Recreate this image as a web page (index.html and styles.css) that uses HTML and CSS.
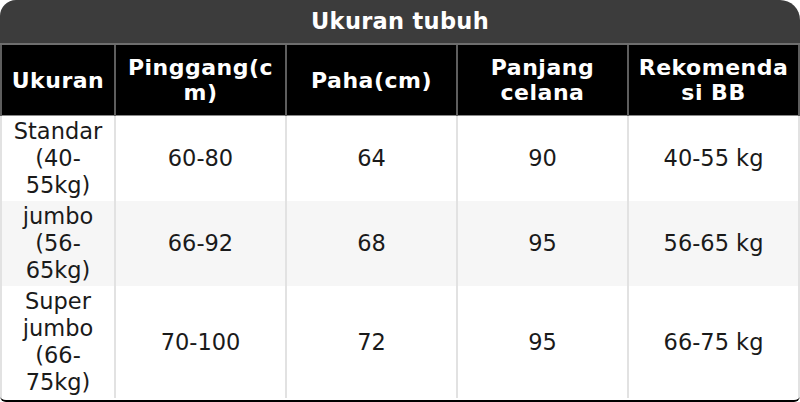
FILE: index.html
```html
<!DOCTYPE html>
<html lang="id">
<head>
<meta charset="utf-8">
<title>Ukuran tubuh</title>
<link rel="stylesheet" href="styles.css">
</head>
<body>
<div class="card">
  <div class="title">Ukuran tubuh</div>
  <table class="sizes">
    <colgroup>
      <col class="col-first">
      <col>
      <col>
      <col>
      <col>
    </colgroup>
    <thead>
      <tr>
        <th>Ukuran</th>
        <th>Pinggang(cm)</th>
        <th>Paha(cm)</th>
        <th>Panjang celana</th>
        <th>Rekomendasi BB</th>
      </tr>
    </thead>
    <tbody>
      <tr>
        <td>Standar (40-55kg)</td>
        <td>60-80</td>
        <td>64</td>
        <td>90</td>
        <td>40-55 kg</td>
      </tr>
      <tr class="alt">
        <td>jumbo (56-65kg)</td>
        <td>66-92</td>
        <td>68</td>
        <td>95</td>
        <td>56-65 kg</td>
      </tr>
      <tr>
        <td>Super jumbo (66-75kg)</td>
        <td>70-100</td>
        <td>72</td>
        <td>95</td>
        <td>66-75 kg</td>
      </tr>
    </tbody>
  </table>
</div>
</body>
</html>
```
FILE: styles.css
```css
html, body {
  margin: 0;
  padding: 0;
  background: #ffffff;
}

body {
  font-family: "DejaVu Sans", "Liberation Sans", sans-serif;
}

.card {
  width: 800px;
  height: 402px;
  box-sizing: border-box;
  overflow: hidden;
  border-radius: 16px 20px 6px 6px;
  border-bottom: 2px solid #000000;
  background: #ffffff;
}

.title {
  height: 43px;
  line-height: 43px;
  background: #3c3c3c;
  border-bottom: 2px solid #6e6e6e;
  color: #ffffff;
  font-weight: bold;
  font-size: 22.5px;
  letter-spacing: 0.3px;
  text-align: center;
}

.sizes {
  width: 100%;
  border-collapse: collapse;
  table-layout: fixed;
}

.col-first {
  width: 114px;
}

.sizes th {
  background: #000000;
  color: #ffffff;
  font-weight: bold;
  font-size: 22px;
  letter-spacing: 0.5px;
  line-height: 25px;
  padding: 10px 7px;
  text-align: center;
  vertical-align: middle;
  overflow-wrap: anywhere;
  border-left: 2px solid #5e5e5e;
  border-right: 2px solid #5e5e5e;
  border-bottom: 1px solid #8a8a8a;
}

.sizes td {
  color: #1a1a1a;
  font-size: 22.5px;
  line-height: 27px;
  padding: 2px 6px;
  text-align: center;
  vertical-align: middle;
  overflow-wrap: anywhere;
  border-left: 2px solid #e2e2e2;
  border-right: 2px solid #e2e2e2;
}

.sizes tr.alt td {
  background: #f6f6f6;
}
```
